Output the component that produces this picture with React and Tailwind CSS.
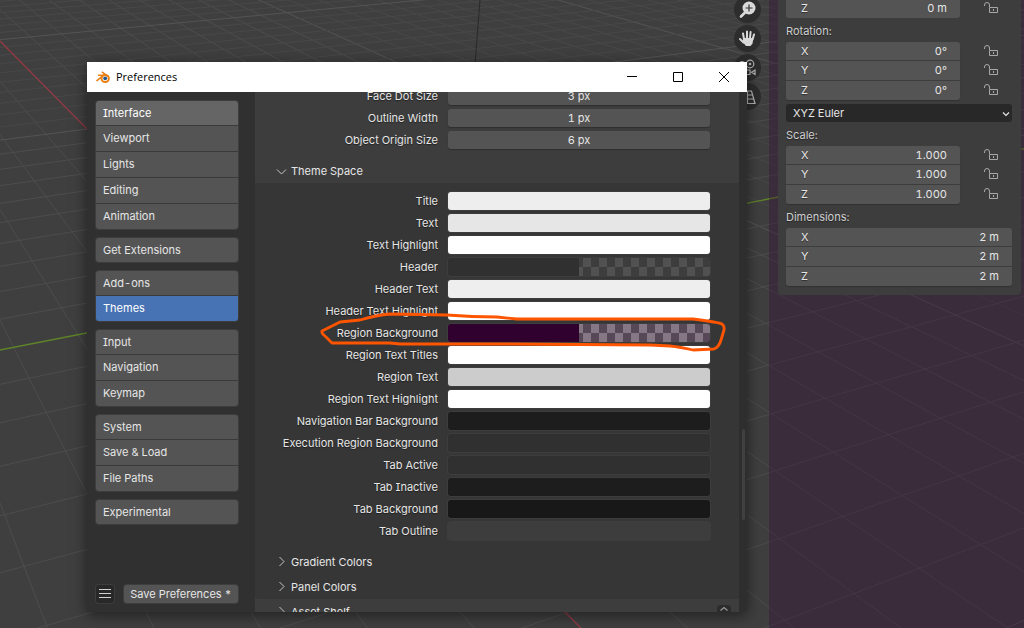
import React, { useState } from "react";

const navGroups = [
  ["Interface", "Viewport", "Lights", "Editing", "Animation"],
  ["Get Extensions"],
  ["Add-ons", "Themes"],
  ["Input", "Navigation", "Keymap"],
  ["System", "Save & Load", "File Paths"],
  ["Experimental"],
];

const sizeFields = [
  { id: "face-dot-size", label: "Face Dot Size", value: "3 px" },
  { id: "outline-width", label: "Outline Width", value: "1 px" },
  { id: "object-origin-size", label: "Object Origin Size", value: "6 px" },
];

const themeSpace = [
  { id: "title", label: "Title", color: "bg-[#eeeeee]" },
  { id: "text", label: "Text", color: "bg-[#e6e6e6]" },
  { id: "text-hi", label: "Text Highlight", color: "bg-white" },
  {
    id: "header",
    label: "Header",
    color: "bg-[#303030]",
    alpha: "bg-[repeating-conic-gradient(#3d3d3d_0_25%,#515151_0_50%)]",
  },
  { id: "header-text", label: "Header Text", color: "bg-[#eeeeee]" },
  { id: "header-text-hi", label: "Header Text Highlight", color: "bg-white" },
  {
    id: "region",
    label: "Region Background",
    color: "bg-[#30002e]",
    alpha: "bg-[repeating-conic-gradient(#857884_0_25%,#574858_0_50%)]",
  },
  { id: "region-titles", label: "Region Text Titles", color: "bg-white" },
  { id: "region-text", label: "Region Text", color: "bg-[#cccccc]" },
  { id: "region-text-hi", label: "Region Text Highlight", color: "bg-white" },
  { id: "nav-bar", label: "Navigation Bar Background", color: "bg-[#1d1d1d]" },
  { id: "execution", label: "Execution Region Background", color: "bg-[#303030]" },
  { id: "tab-active", label: "Tab Active", color: "bg-[#303030]" },
  { id: "tab-inactive", label: "Tab Inactive", color: "bg-[#1d1d1d]" },
  { id: "tab-back", label: "Tab Background", color: "bg-[#181818]" },
  { id: "tab-outline", label: "Tab Outline", color: "bg-[#3d3d3d]" },
];

export default function App() {
  return (
    <div className="relative flex h-screen overflow-hidden bg-[#3f3f3f] font-[Inter,sans-serif] text-[11px] leading-4 text-[#e6e6e6] [font-feature-settings:'cv08','tnum'] [text-shadow:0_1px_1px_rgba(0,0,0,0.45)]">
      <FloorGrid />
      <div className="relative flex flex-1 justify-end pr-2">
        <ViewGizmos />
      </div>
      <TransformSidebar />
      <PreferencesWindow />
    </div>
  );
}

/* ---------- 3D viewport ---------- */

const HORIZON = -245;

// Floor lines run to a vanishing point; `near` is the drop below the horizon at x = 0
function floorLine(vanishX, near) {
  const slope = near / -vanishX;
  return { x1: 0, y1: HORIZON + near, x2: 1600, y2: HORIZON + near + slope * 1600 };
}

function FloorGrid() {
  const lines = [];
  for (let i = -44; i <= 7; i++) {
    if (i === 0) continue;
    lines.push({ ...floorLine(-283, 286 / (1 - 0.1235 * i)), key: `a${i}`, i });
  }
  for (let i = -44; i <= 17; i++) {
    if (i === 0) continue;
    lines.push({ ...floorLine(3028, 595 / (1 - 0.0545 * i)), key: `b${i}`, i });
  }

  return (
    <svg className="absolute inset-0 h-full w-full" aria-hidden="true">
      {lines.map(({ key, i, ...line }) => (
        <line
          key={key}
          {...line}
          stroke={i % 10 === 0 ? "#545454" : i > -10 ? "#4d4d4d" : "#484848"}
          strokeWidth="1"
        />
      ))}
      <line {...floorLine(-283, 286)} stroke="#8f3a45" strokeWidth="1.4" />
      <line {...floorLine(3028, 595)} stroke="#5f8429" strokeWidth="1.4" />
      <line x1="480" y1="0" x2="475" y2="64" stroke="#2a2a2a" />
    </svg>
  );
}

function ViewGizmos() {
  return (
    <div className="-mt-1 flex flex-col gap-0.5">
      <GizmoButton label="Zoom">
        <circle cx="10" cy="7" r="6.5" fill="#d9d9d9" />
        <path d="M6 11.500 2 15.500" stroke="#d9d9d9" strokeWidth="2.600" strokeLinecap="round" />
        <path d="M10 3.500v7M6.500 7h7" stroke="#333" strokeWidth="1.200" />
      </GizmoButton>
      <GizmoButton label="Move view">
        <g stroke="#d9d9d9" strokeLinecap="round" strokeWidth="2">
          <path d="M5 9 4 3.500M8 8V1.500M11 8l.6-6M13.500 9.500l1.500-5M4.500 12.500 1 9" />
        </g>
        <path d="M4 8h10.500l-1 5.500-2 2.500H7l-3-3.500z" fill="#d9d9d9" />
      </GizmoButton>
      <GizmoButton label="Camera view">
        <g fill="none" stroke="#b5b5b5" strokeWidth="1.200">
          <circle cx="3" cy="5" r="2.500" />
          <circle cx="11" cy="5" r="3.800" />
          <path d="M1 11h10v4.500H1zM16 11v4.500l-3.500-2.200z" />
        </g>
        <circle cx="11" cy="5" r="1.300" fill="#b5b5b5" />
      </GizmoButton>
      <GizmoButton label="Perspective">
        <path
          d="M4.500 3h8l3.500 12.500H1zM8.500 3v12.500M3.500 7h10M2.500 11h12.500"
          fill="none"
          stroke="#b5b5b5"
          strokeWidth="1.200"
        />
      </GizmoButton>
    </div>
  );
}

function GizmoButton({ label, children }) {
  return (
    <button
      aria-label={label}
      className="flex h-[27px] w-[27px] items-center justify-center rounded-full bg-[#2d2d2d]"
    >
      <svg width="17" height="17" viewBox="0 0 17 17">
        {children}
      </svg>
    </button>
  );
}

/* ---------- Sidebar ---------- */

function TransformSidebar() {
  return (
    <aside className="relative w-[255px] bg-[#300030]/30 pr-[3px] pl-[9px]">
      <div className="rounded-b-sm bg-[#3d3d3d] pr-[9px] pb-[9px] pl-2">
        <div className="-mt-px grid h-[19px] grid-cols-[1fr_52px]">
          <div className="flex overflow-hidden rounded-b-[3px]">
            <AxisField id="location-z" axis="Z" value="0 m" />
          </div>
          <LockButton label="Lock location Z" />
        </div>

        <GroupLabel>Rotation:</GroupLabel>
        <AxisGroup name="rotation" values={["0°", "0°", "0°"]} lockable />

        <div className="relative mt-1">
          <select
            aria-label="Rotation mode"
            className="block h-[18px] w-full appearance-none rounded-[3px] bg-[#282828] pl-[7px] leading-4"
          >
            <option>XYZ Euler</option>
          </select>
          <svg
            className="pointer-events-none absolute top-1.5 right-0.5"
            width="8"
            height="8"
            viewBox="0 0 8 8"
          >
            <path d="M1 2.500 4 5.500 7 2.500" fill="none" stroke="#e6e6e6" strokeWidth="1.200" />
          </svg>
        </div>

        <GroupLabel>Scale:</GroupLabel>
        <AxisGroup name="scale" values={["1.000", "1.000", "1.000"]} lockable />

        <GroupLabel>Dimensions:</GroupLabel>
        <AxisGroup name="dimensions" values={["2 m", "2 m", "2 m"]} />
      </div>
    </aside>
  );
}

function GroupLabel({ children }) {
  return <div className="flex h-6 items-center pt-0.5 text-[#cfcfcf]">{children}</div>;
}

function AxisGroup({ name, values, lockable = false }) {
  const axes = ["X", "Y", "Z"];
  return (
    <div className={lockable ? "grid grid-cols-[1fr_52px]" : "grid"}>
      <div className="grid grid-rows-[18px_19px_19px] gap-px overflow-hidden rounded-[3px] bg-[#3d3d3d] shadow-[0_1px_1px_rgba(0,0,0,0.2)]">
        {axes.map((axis, i) => (
          <AxisField key={axis} id={`${name}-${axis}`} axis={axis} value={values[i]} />
        ))}
      </div>
      {lockable && (
        <div className="grid grid-rows-[18px_19px_19px] gap-px">
          {axes.map((axis) => (
            <LockButton key={axis} label={`Lock ${name} ${axis}`} />
          ))}
        </div>
      )}
    </div>
  );
}

function AxisField({ id, axis, value }) {
  return (
    <div className="flex min-w-0 flex-1 items-start bg-[#545454] pt-px pr-[13px] pl-[15px]">
      <label htmlFor={id}>{axis}</label>
      <input id={id} defaultValue={value} className="w-full min-w-0 flex-1 text-right" />
    </div>
  );
}

function LockButton({ label }) {
  return (
    <button aria-label={label} className="flex items-start pt-[3px] pl-6">
      <svg width="15" height="12" viewBox="0 0 15 12" fill="none" stroke="#a8a8a8">
        <path d="M.5 4V3a2.500 2.500 0 0 1 5 0V5" />
        <path d="M5.500 5.500h8v5h-8zM9.500 7v2" />
      </svg>
    </button>
  );
}

/* ---------- Preferences window ---------- */

function PreferencesWindow() {
  return (
    <div className="absolute top-[62px] right-[277px] bottom-4 left-[87px] flex flex-col bg-[#303030] shadow-[0_3px_14px_rgba(0,0,0,0.5)]">
      <TitleBar />
      <div className="flex min-h-0 flex-1">
        <Navigation />
        <main className="min-w-0 flex-1 overflow-hidden bg-[#3d3d3d]">
          <ThemeSettings />
        </main>
        <div className="flex w-2 flex-col items-center bg-[#2e2e2e]">
          <div className="mt-[337px] h-[91px] w-[3px] rounded-full bg-[#404040]" />
        </div>
      </div>
      <button
        aria-label="Show region"
        className="absolute right-4 bottom-0 flex h-[7px] w-3.5 justify-center rounded-t-sm bg-[#2c2c2c]"
      >
        <svg width="8" height="7" viewBox="0 0 8 7">
          <path d="M.5 5.500 4 2.500 7.500 5.500" fill="none" stroke="#9a9a9a" strokeWidth="1.200" />
        </svg>
      </button>
      <Annotation />
    </div>
  );
}

function BlenderLogo() {
  return (
    <svg width="14" height="13" viewBox="0 0 14 13" fill="none" aria-hidden="true">
      <ellipse cx="9.200" cy="7.500" rx="3.700" ry="3.500" stroke="#ea7e12" strokeWidth="2" />
      <g stroke="#ea7e12" strokeLinecap="round" strokeWidth="1.500">
        <path d="M.9 9.600 6.500 5.200M2.500 4.300H8M6.300 1.200l5.200 4" />
      </g>
      <circle cx="9.200" cy="7.300" r="1.900" fill="#265787" />
    </svg>
  );
}

function TitleBar() {
  return (
    <header className="flex h-[30px] shrink-0 items-center bg-white pl-[9px] font-['Open_Sans',sans-serif] text-black [text-shadow:none]">
      <BlenderLogo />
      <h1 className="ml-1.5 flex-1">Preferences</h1>
      <button aria-label="Minimize" className="flex h-full w-[46px] items-center justify-center">
        <svg width="10" height="11" viewBox="0 0 10 11" stroke="#000">
          <path d="M0 4.500h10" />
        </svg>
      </button>
      <button aria-label="Maximize" className="flex h-full w-[46px] items-center justify-center">
        <svg width="10" height="10" viewBox="0 0 10 10" fill="none" stroke="#000">
          <path d="M.5.5h9v9h-9z" />
        </svg>
      </button>
      <button aria-label="Close" className="flex h-full w-[46px] items-center justify-center">
        <svg width="10" height="10" viewBox="0 0 10 10" stroke="#000">
          <path d="M0 0l10 10M10 0 0 10" />
        </svg>
      </button>
    </header>
  );
}

function Navigation() {
  const [active, setActive] = useState("Themes");

  return (
    <div className="flex w-[168px] shrink-0 flex-col justify-between py-[9px] pr-[17px] pl-[9px]">
      <nav className="flex flex-col gap-[9px]">
        {navGroups.map((group) => (
          <div
            key={group[0]}
            className="flex flex-col gap-px overflow-hidden rounded-[3px] bg-[#3a3a3a] ring-1 ring-[#3d3d3d]"
          >
            {group.map((item) => (
              <button
                key={item}
                onClick={() => setActive(item)}
                className={`h-[25px] px-[7px] pb-px text-left first:h-6 first:pb-0 ${
                  item === active
                    ? "bg-[#4772b3] text-white"
                    : item === "Interface"
                      ? "bg-[#656565] text-white"
                      : "bg-[#545454]"
                }`}
              >
                {item}
              </button>
            ))}
          </div>
        ))}
      </nav>

      <div className="flex gap-2.5">
        <button
          aria-label="Menu"
          className="flex h-[18px] w-[18px] items-center justify-center rounded-[3px] bg-[#282828] ring-1 ring-[#3d3d3d]"
        >
          <svg width="12" height="10" viewBox="0 0 12 10" stroke="#d0d0d0">
            <path d="M0 .5h12M0 4.500h12M0 8.500h12" />
          </svg>
        </button>
        <button className="h-[18px] flex-1 rounded-[3px] bg-[#545454] whitespace-nowrap ring-1 ring-[#3d3d3d]">
          Save Preferences *
        </button>
      </div>
    </div>
  );
}

function ThemeSettings() {
  return (
    <>
      <div className="-mt-[5px] flex flex-col gap-1">
        {sizeFields.map((field) => (
          <SettingRow key={field.id} id={field.id} label={field.label}>
            <input
              id={field.id}
              defaultValue={field.value}
              className="h-[18px] w-full rounded-[3px] bg-[#545454] text-center shadow-[0_1px_1px_rgba(0,0,0,0.25)]"
            />
          </SettingRow>
        ))}
      </div>

      <PanelHeader title="Theme Space" className="mt-2.5 h-6" open />
      <div className="rounded-b-[3px] bg-[#363636] pt-[9px]">
        <div className="flex flex-col gap-1">
          {themeSpace.map((item) => (
            <SettingRow key={item.id} id={item.id} label={item.label}>
              <button
                id={item.id}
                className={`flex h-[18px] w-full overflow-hidden rounded-[3px] ring-1 ring-[#3d3d3d] ${item.color}`}
              >
                {item.alpha && (
                  <span
                    className={`ml-auto h-full w-1/2 bg-size-[16px_18px] bg-position-[4px_0] ${item.alpha}`}
                  />
                )}
              </button>
            </SettingRow>
          ))}
        </div>
        <PanelHeader title="Gradient Colors" className="mt-[9px] h-[25px]" />
        <PanelHeader title="Panel Colors" className="h-[25px]" />
      </div>
      <PanelHeader title="Asset Shelf" className="h-[25px]" />
    </>
  );
}

function SettingRow({ id, label, children }) {
  return (
    <div className="grid grid-cols-[183px_1fr] items-center gap-2.5 pr-[29px]">
      <label htmlFor={id} className="text-right whitespace-nowrap">
        {label}
      </label>
      {children}
    </div>
  );
}

function PanelHeader({ title, className, open = false }) {
  return (
    <button aria-expanded={open} className={`flex w-full items-center gap-1 pl-[21px] ${className}`}>
      <svg width="11" height="11" viewBox="0 0 11 11" fill="none" stroke="#c8c8c8">
        <path d={open ? "M1 3.500 5.500 8 10 3.500" : "M3.500 1 8 5.500 3.500 10"} />
      </svg>
      {title}
    </button>
  );
}

// Hand-drawn loop around the Region Background row
function Annotation() {
  return (
    <svg className="pointer-events-none absolute inset-0 h-full w-full" aria-hidden="true">
      <path
        d="M245 281 239 275Q234 271 235 269L253 260 273 258Q290 253 303 252L360 253Q385 255 410 255L430 257H606Q622 259 632 261 638 262 637 268L634 278Q632 285 627 287L606 288Q593 285 583 284L563 283 423 282H313L303 281Z"
        fill="none"
        stroke="#ff5500"
        strokeWidth="2.800"
        strokeLinejoin="round"
      />
    </svg>
  );
}
